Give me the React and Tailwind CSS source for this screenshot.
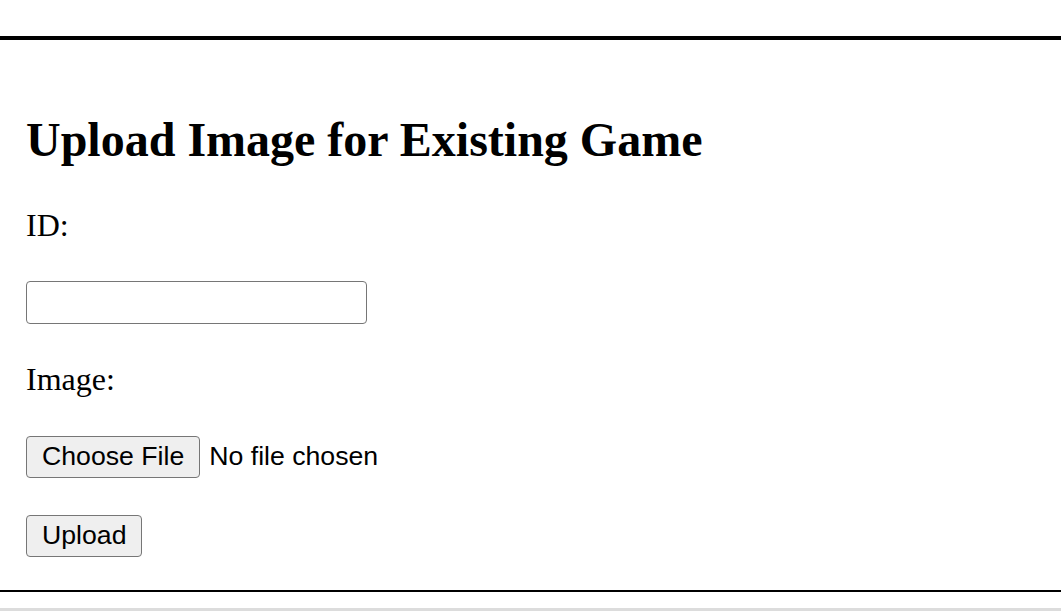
import { useState } from 'react';

export default function App() {
  const [id, setId] = useState('');

  return (
    <div className="min-h-[611px] bg-white pt-[36px] font-['Liberation_Serif','Times_New_Roman',serif] text-black">
      <div className="h-[4px] bg-black" />

      <section className="px-[26px]">
        <h1 className="mt-[73px] text-[48px] leading-[53px] font-bold">
          Upload Image for Existing Game
        </h1>

        <form onSubmit={(e) => e.preventDefault()}>
          <label htmlFor="game-id" className="block mt-[42px] text-[32px] leading-[35px]">
            ID:
          </label>
          <input
            id="game-id"
            type="text"
            value={id}
            onChange={(e) => setId(e.target.value)}
            className="block mt-[38px] w-[341px] h-[43px] border border-[#767676] rounded-[4px] px-2 text-[26px] bg-white outline-none"
          />

          <label className="block mt-[38px] text-[32px] leading-[35px]">Image:</label>

          {/* file picker */}
          <div className="mt-[39px] flex items-center gap-[9px] font-['Liberation_Sans',Arial,sans-serif] text-[26.67px]">
            <button
              type="button"
              className="h-[42px] px-[15px] pb-[2px] flex items-center bg-[#efefef] border border-[#767676] rounded-[4px] leading-none"
            >
              Choose File
            </button>
            <span className="pb-[2px]">No file chosen</span>
          </div>

          <button
            type="submit"
            className="mt-[37px] h-[42px] px-[15px] pb-[2px] flex items-center bg-[#efefef] border border-[#767676] rounded-[4px] font-['Liberation_Sans',Arial,sans-serif] text-[26.67px] leading-none"
          >
            Upload
          </button>
        </form>
      </section>

      <div className="mt-[33px] h-[2px] bg-black" />
      <div className="mt-[16px] h-[3px] bg-[#dcdcdc]" />
    </div>
  );
}
